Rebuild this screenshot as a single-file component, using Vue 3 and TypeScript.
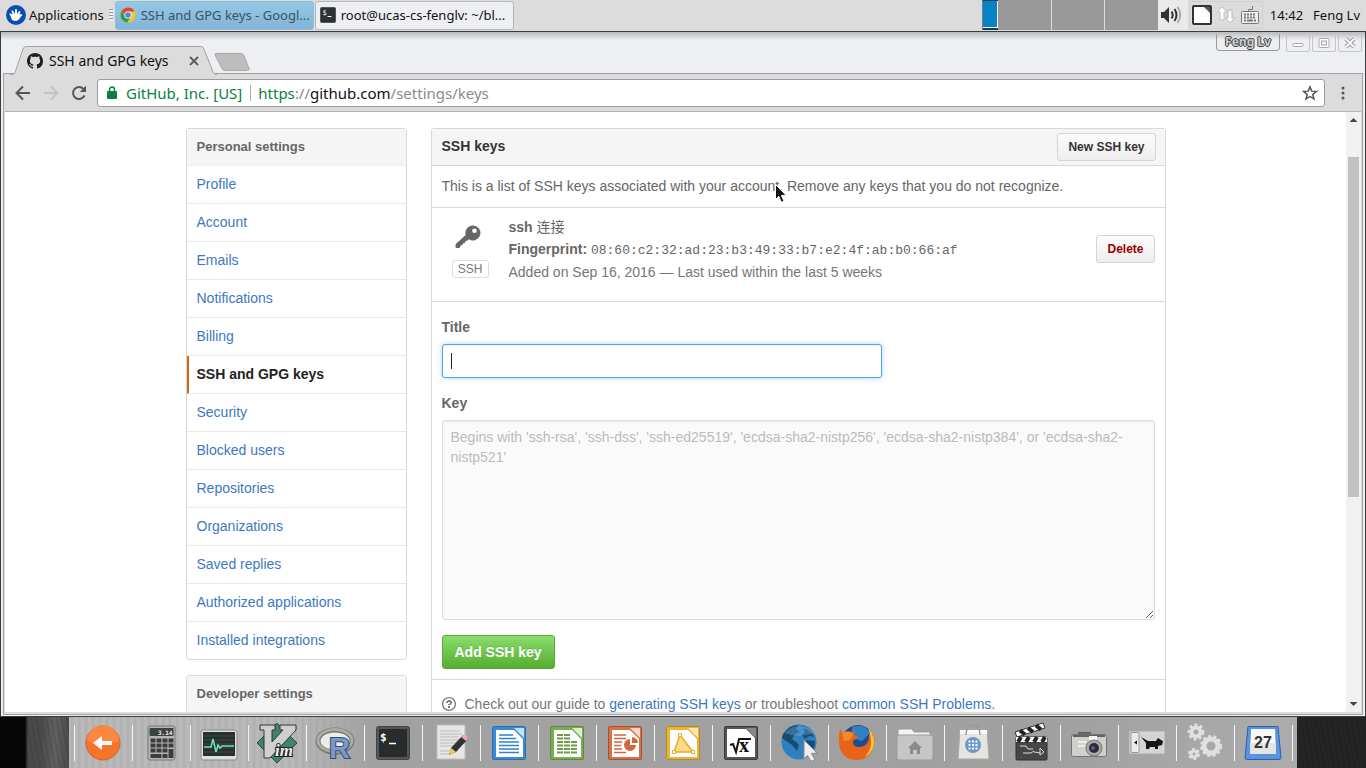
<script setup lang="ts">
import { ref } from 'vue'

const personalLinks: string[] = [
  'Profile',
  'Account',
  'Emails',
  'Notifications',
  'Billing',
  'SSH and GPG keys',
  'Security',
  'Blocked users',
  'Repositories',
  'Organizations',
  'Saved replies',
  'Authorized applications',
  'Installed integrations',
]
const current = 'SSH and GPG keys'
const title = ref('')
const keyText = ref('')
const placeholder =
  "Begins with 'ssh-rsa', 'ssh-dss', 'ssh-ed25519', 'ecdsa-sha2-nistp256', 'ecdsa-sha2-nistp384', or 'ecdsa-sha2-nistp521'"
</script>

<template>
  <div class="desktop">
    <header class="panel">
      <button class="apps" type="button">
        <svg width="20" height="20" viewBox="0 0 20 20">
          <circle cx="10" cy="10" r="10" fill="#0a4fb0" />
          <path d="M3.4 8.6c1.400-.6 2 .2 2.600 1l.5-.2-1-3.500c.8-.8 1.700-.3 2 .5l.9 2.200.6-.1.1-4c.9-.8 1.800-.4 1.900.5l.1 3.400.6.2 1.300-2.500c1.100-.3 1.600.4 1.300 1.300l-.8 2.300c1.300-.6 2.600-.6 3.100.3-1.300 1-2.300 2.200-3 3.600-1.300 2.500-4.600 3.200-7 1.700-1.300-.8-1.300-2.400-1.800-3.700-.4-1.100-1.500-1.700-1.400-3z" fill="#fff" />
        </svg>
        <span>Applications</span>
      </button>
      <span class="grip"></span>
      <button class="task active" type="button">
        <svg width="16" height="16" viewBox="0 0 16 16">
          <circle cx="8" cy="8" r="7.500" fill="#f6c62f" />
          <path d="M1.500 4.200A7.500 7.500 0 0 1 14.700 4.500H8a3.600 3.600 0 0 0-3.400 4.600z" fill="#e0453a" />
          <path d="M1.500 4.200A7.500 7.500 0 0 0 7.300 15.500l3.200-5.500A3.500 3.500 0 0 1 4.800 9.600z" fill="#2f9e52" />
          <circle cx="8" cy="8" r="3.600" fill="#fff" />
          <circle cx="8" cy="8" r="2.800" fill="#4a86e8" />
        </svg>
        <span>SSH and GPG keys - Googl...</span>
      </button>
      <button class="task" type="button">
        <svg width="16" height="16" viewBox="0 0 16 16">
          <rect x=".5" y=".5" width="15" height="15" rx="1" fill="#2e3133" stroke="#555" />
          <text x="2.500" y="8" class="mono-glyph" font-size="7" fill="#fff">$</text>
          <path d="M7.500 9.500h4" stroke="#fff" />
        </svg>
        <span>root@ucas-cs-fenglv: ~/bl...</span>
      </button>
      <div class="panel-gap"></div>
      <div class="pager">
        <span class="ws-now"></span><span class="ws-first"></span><span class="ws"></span><span class="ws"></span>
      </div>
      <button class="sound" type="button" aria-label="Volume">
        <svg width="24" height="22" viewBox="0 0 24 22">
          <path d="M1 8h3l5-5v16l-5-5H1z" fill="#2d3436" />
          <path d="M11.500 7.500q2.500 3.500 0 7M14.500 5q4 6 0 12" fill="none" stroke="#2d3436" stroke-width="2" />
          <path d="M17.500 3q5.500 8 0 16" fill="none" stroke="#aaa" stroke-width="2" />
        </svg>
      </button>
      <div class="tray">
        <svg width="20" height="20" viewBox="0 0 20 20">
          <rect x="1" y="1" width="18" height="18" rx="1" fill="#fff" stroke="#333" stroke-width="2" />
          <path d="M12 2h6v6z" fill="#555" />
        </svg>
        <svg width="20" height="20" viewBox="0 0 20 20">
          <path d="M6 2l5 5H8v8H4V7H1z" fill="#fafafa" stroke="#c6c6c6" />
          <path d="M14 18l5-5h-3V5h-4v8H9z" fill="#fafafa" stroke="#bbb" />
        </svg>
        <svg width="20" height="20" viewBox="0 0 20 20" fill="none" stroke="#777">
          <path d="M8.500 7V4.500h4V1" />
          <rect x="1.500" y="6.500" width="17" height="12" rx="1" fill="#efefef" />
          <path d="M4 9.500h12M4 12.500h12" stroke-width="2" stroke-dasharray="2 1" />
          <path d="M4 15.500h2M7 15.500h6M14 15.500h2" stroke-width="2" />
        </svg>
      </div>
      <span class="clock">14:42</span>
      <span class="user">Feng Lv</span>
    </header>

    <section class="window">
      <div class="titlebar">
        <div class="tab">
          <svg class="tab-shape" width="208" height="30" viewBox="0 0 208 30">
            <path d="M0 28.500h2q2 0 3-2L13 3q1-2.500 3-2.500h175q2 0 3 2.500l9 23q1 2.500 4 2.500V30H0z" fill="#dcdcdc" />
            <path d="M0 28.500h2q2 0 3-2L13 3q1-2.500 3-2.500h175q2 0 3 2.500l9 23q1 2.500 4 2.500" fill="none" stroke="#a3a3a3" />
          </svg>
          <svg class="mark" width="16" height="16" viewBox="0 0 16 16">
            <path d="M8 0C3.58 0 0 3.58 0 8c0 3.54 2.29 6.53 5.47 7.59.4.07.55-.17.55-.38 0-.19-.01-.82-.01-1.490-2.010.37-2.530-.49-2.690-.94-.09-.23-.48-.94-.82-1.130-.28-.15-.68-.52-.01-.53.63-.01 1.080.58 1.230.82.72 1.210 1.870.87 2.330.66.07-.52.28-.87.51-1.070-1.780-.2-3.640-.89-3.640-3.950 0-.87.31-1.590.82-2.150-.08-.2-.36-1.020.08-2.120 0 0 .67-.21 2.200.82.64-.18 1.320-.27 2-.27s1.360.09 2 .27c1.530-1.040 2.200-.82 2.200-.82.44 1.100.16 1.920.08 2.120.51.56.82 1.270.82 2.150 0 3.070-1.870 3.750-3.650 3.950.29.25.54.73.54 1.480 0 1.070-.01 1.930-.01 2.200 0 .21.15.46.55.38A8.010 8.010 0 0 0 16 8c0-4.420-3.580-8-8-8z" fill="#1b1f23" />
          </svg>
          <span class="tab-name">SSH and GPG keys</span>
          <button class="tab-close" type="button" aria-label="Close tab">
            <svg width="10" height="10" viewBox="0 0 10 10"><path d="M1 1l8 8M9 1L1 9" stroke="#5a5a5a" stroke-width="1.800" /></svg>
          </button>
        </div>
        <button class="newtab" type="button" aria-label="New tab">
          <svg width="36" height="19" viewBox="0 0 36 19"><path d="M2 .5h25q2 0 3 2l5 13q.5 2-1.500 2H11q-2 0-3-2L1 2Q.5.500 2 .5z" fill="#bdbdbd" stroke="#a8a8a8" /></svg>
        </button>
        <div class="panel-gap"></div>
        <span class="owner">Feng Lv</span>
        <div class="controls">
          <button type="button" aria-label="Minimize"><svg width="16" height="14" viewBox="0 0 16 14"><rect x="3" y="7.500" width="10" height="3" rx="1" fill="#fff" stroke="#aaa" /></svg></button>
          <button type="button" aria-label="Maximize"><svg width="16" height="14" viewBox="0 0 16 14"><rect x="3" y="2.500" width="10" height="9" rx="1" fill="#fff" stroke="#aaa" /><rect x="5.500" y="5" width="5" height="4" fill="#eee" stroke="#aaa" /></svg></button>
          <button type="button" aria-label="Close"><svg width="16" height="14" viewBox="0 0 16 14"><path d="M4 3l8 8M12 3l-8 8" stroke="#999" stroke-width="4" /><path d="M4 3l8 8M12 3l-8 8" stroke="#fff" stroke-width="2" /></svg></button>
        </div>
      </div>

      <div class="frame">
        <nav class="toolbar">
          <button type="button" aria-label="Back"><svg width="16" height="16" viewBox="0 0 16 16"><path d="M15 8H2M8 1.500L1.500 8 8 14.500" fill="none" stroke="#555" stroke-width="2" /></svg></button>
          <button type="button" aria-label="Forward"><svg width="16" height="16" viewBox="0 0 16 16"><path d="M1 8h13M8 1.500L14.500 8 8 14.500" fill="none" stroke="#c4c4c4" stroke-width="2" /></svg></button>
          <button type="button" aria-label="Reload"><svg width="16" height="16" viewBox="0 0 16 16"><path d="M13.500 10.500A6 6 0 1 1 12.500 4" fill="none" stroke="#555" stroke-width="2" /><path d="M15 .8v6.200H8.800z" fill="#555" /></svg></button>
          <div class="omnibox">
            <svg width="10" height="13" viewBox="0 0 10 13"><rect x="0" y="5" width="10" height="8" rx="1" fill="#0b8043" /><path d="M2.500 5.500V3.500a2.500 2.500 0 0 1 5 0v2" fill="none" stroke="#0b8043" stroke-width="1.500" /></svg>
            <span class="secure">GitHub, Inc. [US]</span>
            <span class="url" role="textbox" aria-label="Address"><span class="green">https</span><span class="dim">://</span>github.com<span class="dim">/settings/keys</span></span>
            <button type="button" aria-label="Bookmark"><svg width="16" height="16" viewBox="0 0 16 16"><path d="M8 1.800l1.700 4.300 4.700.3-3.600 3 1.200 4.600L8 11.500 4 14l1.200-4.600-3.600-3 4.700-.3z" fill="none" stroke="#4d4d4d" stroke-width="1.400" /></svg></button>
          </div>
          <button type="button" aria-label="Menu"><svg width="4" height="14" viewBox="0 0 4 14" fill="#555"><circle cx="2" cy="2" r="1.500" /><circle cx="2" cy="7" r="1.500" /><circle cx="2" cy="12" r="1.500" /></svg></button>
        </nav>

        <div class="viewport">
          <div class="page">
            <div class="container">
              <aside class="side">
                <nav class="menu">
                  <h3>Personal settings</h3>
                  <a v-for="link in personalLinks" :key="link" href="#" :class="{ selected: link === current }">{{ link }}</a>
                </nav>
                <nav class="menu">
                  <h3>Developer settings</h3>
                </nav>
              </aside>

              <main class="box">
                <div class="box-head">
                  <h2>SSH keys</h2>
                  <button class="btn" type="button">New SSH key</button>
                </div>
                <p class="intro">This is a list of SSH keys associated with your account. Remove any keys that you do not recognize.</p>
                <div class="key-row">
                  <div class="key-kind">
                    <svg width="26" height="24" viewBox="0 0 26 24">
                      <path fill="#666" fill-rule="evenodd" d="M18 .5a7.500 7.500 0 0 0-7.300 9.600L1.300 18.500Q.5 19.200.5 20.200v1.500Q.5 23 1.800 23h2q1.200 0 1.400-1.200l.3-1.300 1.700-.2.8-2 1.800-.2.8-2.200 2-.3 1.200-1.300a7.500 7.500 0 1 0 4.200-13.800zM19.500 3.500a2.300 2.300 0 1 1 0 4.600 2.300 2.300 0 0 1 0-4.600z" />
                    </svg>
                    <span class="badge">SSH</span>
                  </div>
                  <div class="key-info">
                    <div><strong>ssh</strong> 连接</div>
                    <div><strong>Fingerprint:</strong> <code>08:60:c2:32:ad:23:b3:49:33:b7:e2:4f:ab:b0:66:af</code></div>
                    <div class="muted">Added on Sep 16, 2016 — Last used within the last 5 weeks</div>
                  </div>
                  <button class="btn danger" type="button">Delete</button>
                </div>
                <form class="form" @submit.prevent>
                  <label for="key-title">Title</label>
                  <input id="key-title" v-model="title" type="text" />
                  <label for="key-body">Key</label>
                  <textarea id="key-body" v-model="keyText" :placeholder="placeholder"></textarea>
                  <button class="btn primary" type="submit">Add SSH key</button>
                </form>
                <p class="help">
                  <svg width="14" height="16" viewBox="0 0 14 16"><path fill="#767676" d="M6 10h2v2H6v-2zm4-3.500C10 8.640 8 9 8 9H6c0-.55.45-1 1-1h.5c.28 0 .5-.22.5-.5v-1c0-.28-.22-.5-.5-.5h-1c-.28 0-.5.22-.5.5V7H4c0-1.500 1.500-3 3-3s3 1 3 2.500zM7 2.300c3.140 0 5.700 2.560 5.700 5.700s-2.560 5.700-5.700 5.700A5.710 5.710 0 0 1 1.300 8c0-3.140 2.560-5.700 5.700-5.700zM7 1C3.140 1 0 4.140 0 8s3.140 7 7 7 7-3.140 7-7-3.140-7-7-7z" /></svg>
                  <span>Check out our guide to <a href="#">generating SSH keys</a> or troubleshoot <a href="#">common SSH Problems</a>.</span>
                </p>
              </main>
            </div>
          </div>
          <div class="scrollbar">
            <svg width="15" height="15" viewBox="0 0 15 15"><path d="M3.500 10h8l-4-4z" fill="#444" /></svg>
            <div class="track"><div class="thumb"></div></div>
            <svg width="15" height="15" viewBox="0 0 15 15"><path d="M3.500 5h8l-4 4z" fill="#444" /></svg>
          </div>
        </div>
      </div>
    </section>

    <footer class="shelf">
      <nav class="dock">
        <button type="button" aria-label="Back">
          <svg viewBox="0 0 40 40"><circle cx="20" cy="20" r="17" fill="#f4742c" stroke="#d9622a" /><path d="M4 18a16 16 0 0 1 32 0q-16 5-32 0z" fill="#ff9248" opacity=".7" /><path d="M10 20l9-7v5h10v4H19v5z" fill="#fff" /></svg>
        </button>
        <button type="button" aria-label="Calculator">
          <svg viewBox="0 0 40 40"><rect x="7" y="3" width="27" height="34" rx="2" fill="#b5b5b3" stroke="#777" /><rect x="8.500" y="5" width="24" height="8" rx="1" fill="#3e4240" /><text x="17" y="11.500" class="mono-glyph" font-size="6" font-weight="bold" fill="#eee">3.14</text><g stroke="#3c3c3c" stroke-width="4" stroke-dasharray="5 1"><path d="M9.500 17.500h23M9.500 22.500h23M9.500 27.500h17" /></g><path d="M9.500 33h11M21.500 33h5" stroke="#3c3c3c" stroke-width="4" /><rect x="27.500" y="26" width="5" height="9" fill="#3c3c3c" /></svg>
        </button>
        <button type="button" aria-label="System monitor">
          <svg viewBox="0 0 40 40"><rect x="2" y="7" width="36" height="30" rx="2" fill="#dededc" stroke="#888" /><rect x="4" y="9" width="32" height="24" fill="#27302d" /><path d="M5 13h30M5 17h30M5 21h30M5 25h30M5 29h30" stroke="#3e4a46" /><path d="M5 24h7l2-8 3 13 2-7 2 3 2-2h12" fill="none" stroke="#74e0b8" stroke-width="1.500" /></svg>
        </button>
        <button type="button" aria-label="Vim">
          <svg viewBox="0 0 40 40"><path d="M20 0l20 20-20 20L0 20z" fill="#3f8468" stroke="#24503f" /><path d="M3 2h15v5h-3v12L26 7h-3V2h16v5L13 35H7V7H3z" fill="#cfcfcf" stroke="#333" /><text x="18" y="33" class="serif-glyph vim-text" font-size="17" font-style="italic" font-weight="bold" fill="#eee" stroke="#222" stroke-width="2">im</text></svg>
        </button>
        <button type="button" aria-label="R">
          <svg viewBox="0 0 40 40"><ellipse cx="20" cy="18" rx="17" ry="11" fill="#ececec" stroke="#74786f" stroke-width="5" /><ellipse cx="20" cy="17.500" rx="17" ry="11" fill="none" stroke="#a9ada4" stroke-width="3" /><text x="14" y="35" class="sans-glyph vim-text" font-size="29" font-weight="bold" fill="#7d97c6" stroke="#304a7a" stroke-width="2">R</text></svg>
        </button>
        <button type="button" aria-label="Terminal">
          <svg viewBox="0 0 40 40"><rect x="3.500" y="3.500" width="33" height="33" rx="2" fill="#545756" stroke="#444" /><rect x="6" y="6" width="28" height="28" fill="#292c2c" /><text x="7" y="18" class="mono-glyph" font-size="11" font-weight="bold" fill="#fff">$</text><path d="M16 20.500h7" stroke="#fff" stroke-width="1.500" /></svg>
        </button>
        <button type="button" aria-label="Text editor">
          <svg viewBox="0 0 40 40"><path d="M6 2h28v34H6z" fill="#e6e6e4" stroke="#bbb" /><path d="M9 8h20M9 11h22M9 14h18M9 17h21M9 20h17M9 23h19M9 28h12M9 31h10" stroke="#bbb" /><path d="M18 32l2-7L32 12l5 4-12 13z" fill="#333" /><path d="M32 12q4-2 5 4l-2 2-5-4z" fill="#e6a5c0" /><path d="M18 32l2-7 5 4z" fill="#f1d34b" /></svg>
        </button>
        <button type="button" aria-label="Writer">
          <svg viewBox="0 0 40 40"><rect x="3.500" y="3.500" width="33" height="33" rx="1.500" fill="#3b8bd0" stroke="#2a6fb5" /><path d="M7 7h18l9 9v18H7z" fill="#fff" /><path d="M25 5h10v10z" fill="#c4e1f7" /><path d="M10 12h14M10 15.500h17M10 19h20M10 22.500h20M10 26h20M10 29.500h20" stroke="#2f82cc" stroke-width="1.500" /></svg>
        </button>
        <button type="button" aria-label="Spreadsheet">
          <svg viewBox="0 0 40 40"><rect x="3.500" y="3.500" width="33" height="33" rx="1.500" fill="#7cab55" stroke="#5c8b3a" /><path d="M7 7h18l9 9v18H7z" fill="#fff" /><path d="M25 5h10v10z" fill="#dcedc9" /><path d="M10 12h13M10 15.500h13M10 19h20M10 22.500h20M10 26h20M10 29.500h20" stroke="#6c9f45" stroke-width="2" stroke-dasharray="6 1" /></svg>
        </button>
        <button type="button" aria-label="Presentation">
          <svg viewBox="0 0 40 40"><rect x="3.500" y="3.500" width="33" height="33" rx="1.500" fill="#d6724a" stroke="#a9502c" /><path d="M7 7h18l9 9v18H7z" fill="#fff" /><path d="M25 5h10v10z" fill="#f8d5c4" /><path d="M9 12h12M9 15.500h12M9 19h8M9 22.500h7M9 26h8M9 29.500h12" stroke="#d0673d" stroke-width="1.500" /><path d="M25 16a6 6 0 1 0 6 6h-6zM27 14v6h6q0-5-6-6z" fill="#d0673d" /></svg>
        </button>
        <button type="button" aria-label="Draw">
          <svg viewBox="0 0 40 40"><rect x="3.500" y="3.500" width="33" height="33" rx="1.500" fill="#e9b43a" stroke="#bd8a1d" /><path d="M7 7h18l9 9v18H7z" fill="#fff" /><path d="M25 5h10v10z" fill="#fbe8b5" /><path d="M17 12l13 17H11z" fill="#f9dc8b" stroke="#e8ac1c" stroke-width="1.500" /><path d="M15.500 10.500h3v3h-3zM9.500 27.500h3v3h-3zM28.500 27.500h3v3h-3z" fill="#fff" stroke="#e8ac1c" /></svg>
        </button>
        <button type="button" aria-label="Math">
          <svg viewBox="0 0 40 40"><rect x="3.500" y="3.500" width="33" height="33" rx="1.500" fill="#555" stroke="#3a3a3a" /><path d="M6 6h19l9 9v19H6z" fill="#fff" /><path d="M25 5h10v10z" fill="#888" /><text x="18" y="29" class="serif-glyph" font-size="20" font-weight="bold" fill="#111">x</text><path d="M9 22l3-1 3 8 3-13h12" fill="none" stroke="#111" stroke-width="2" /></svg>
        </button>
        <button type="button" aria-label="Web browser">
          <svg viewBox="0 0 40 40"><circle cx="20" cy="19" r="17.500" fill="#2f80bf" /><path d="M4 11q6-9 15-9l-2 4 4 3-5 2-3 5 4 3 3 3-2 6-5-6-6-4-4-3zM24 5q9 3 11 9l-5-1-4 3-3-4 3-3zM27 17l9 1q0 8-6 14l-3-6z" fill="#1a4c70" /><path d="M5 10q14-14 30 0-14 6-30 0z" fill="#7cc0ec" opacity=".3" /><path d="M25 17l13 13-5.500.5 3.500 6-4 2-3.500-6-3.500 4z" fill="#ededed" stroke="#888" /></svg>
        </button>
        <button type="button" aria-label="Firefox">
          <svg viewBox="0 0 40 40"><circle cx="21" cy="18" r="16" fill="#1c4f8f" /><path d="M15 4q12-5 18 6l-8 8-10-3z" fill="#327fc2" /><path d="M3 6l3 4q4-3 9-1l3-2-1 5 4 2-5 4q-1 6 7 6 10-1 9-14 3 3 2 8 2-3 1-9 4 6 2 14-4 14-17 14Q6 37 2.500 24 1 14 3 6z" fill="#e8641b" /><path d="M31 5q9 9 5 20-3 7-8 9 7-8 6-17-1-8-3-12z" fill="#f7c43a" /><path d="M5 10q6-3 11 1l-3 6-6 1z" fill="#f38b28" /></svg>
        </button>
        <button type="button" aria-label="Home folder">
          <svg viewBox="0 0 40 40"><path d="M3 7q0-1 1-1h13l2 3h15q1 0 1 1v5H3z" fill="#f4f4f4" stroke="#999" /><rect x="2" y="12" width="36" height="25" rx="2" fill="#c6c6c6" stroke="#999" /><path d="M20 18l7 7h-2v6h-3v-4h-4v4h-3v-6h-2z" fill="#8b8b8b" /></svg>
        </button>
        <button type="button" aria-label="Software">
          <svg viewBox="0 0 40 40"><path d="M7 7h27l2 29H5z" fill="#e5e5df" stroke="#aaa" /><path d="M7 7h27v4H7z" fill="#f9f9f7" /><path d="M13 12q0-10 7-10t7 10" fill="none" stroke="#999" stroke-width="1.500" /><circle cx="20" cy="22" r="8" fill="#6d96c9" /><path d="M15.500 18.500h9M15.500 22h9M15.500 25.500h9" stroke="#fff" stroke-width="2" stroke-dasharray="2 1.500" /></svg>
        </button>
        <button type="button" aria-label="Video">
          <svg viewBox="0 0 40 40"><rect x="5" y="14" width="31" height="23" rx="1" fill="#464646" stroke="#303030" /><path d="M4 9L32 0l2 5L6 14z" fill="#fff" stroke="#333" /><path d="M9 7.500l5 4M17 5l5 4M25 2.500l5 4" stroke="#222" stroke-width="4" /><path d="M5 14h31v5H5z" fill="#fff" /><path d="M10 14l-3 5M18 14l-3 5M26 14l-3 5M34 14l-3 5" stroke="#222" stroke-width="4" /><path d="M9 23h6l2 3h5M12 30h8l3-2M23 29l6 1M29 25v7l4-3z" fill="none" stroke="#ddd" /></svg>
        </button>
        <button type="button" aria-label="Camera">
          <svg viewBox="0 0 40 40"><rect x="9" y="9" width="13" height="6" fill="#5d6664" /><rect x="2.500" y="11.500" width="35" height="22" rx="2" fill="#cfd0cc" stroke="#72746f" /><path d="M4 13h32" stroke="#5d6664" stroke-width="2" /><path d="M9 19h8M9 23h7" stroke="#eee" stroke-width="2" /><rect x="20" y="13" width="8" height="4" fill="#f8f8f8" /><circle cx="25" cy="25" r="8" fill="#a7aaa7" stroke="#777" /><circle cx="25" cy="25" r="5" fill="#2b2c33" /><circle cx="24" cy="25" r="2" fill="#704d9b" /></svg>
        </button>
        <button type="button" aria-label="Image viewer">
          <svg viewBox="0 0 40 40"><rect x="2" y="8" width="36" height="23" fill="#d4d4d2" stroke="#aaa" /><rect x="4" y="9.500" width="8" height="20" rx="1" fill="#ebebe9" stroke="#999" /><path d="M7 19.500l3-2v4z" fill="#111" /><path d="M14 14l7 4h8l2-3 3 2 2 1-1 4-4 1v3h-3v-2h-5l-1 2h-3v-6z" fill="#161616" /></svg>
        </button>
        <button type="button" aria-label="Settings">
          <svg viewBox="0 0 40 40" fill="none" stroke="#e0e0e0"><g stroke-dasharray="3 2.200"><circle cx="11" cy="9" r="7" stroke-width="3" /><circle cx="26" cy="23" r="9.500" stroke-width="3" /><circle cx="9" cy="31" r="5" stroke-width="2" /></g><circle cx="11" cy="9" r="4.500" stroke-width="4" /><circle cx="26" cy="23" r="7" stroke-width="5" /><circle cx="9" cy="31" r="3" stroke-width="3" /></svg>
        </button>
        <button type="button" aria-label="Calendar">
          <svg viewBox="0 0 40 40"><path d="M5 3.500h30l3 31q0 2-2 2H4q-2 0-2-2z" fill="#5a93e0" stroke="#2c5fae" /><path d="M8 6h24l1 25H7z" fill="#f8f8f8" /><path d="M7 20h26v11H7z" fill="#e4e4e4" /><text x="20" y="25" class="sans-glyph" font-size="16" font-weight="bold" text-anchor="middle" fill="#333">27</text></svg>
        </button>
      </nav>
    </footer>

    <svg class="pointer" width="14" height="20" viewBox="0 0 14 20"><path d="M.5.500v15l3.300-3.200 2.600 6 2.600-1.200-2.600-5.700h4.800z" fill="#111" stroke="#fff" /></svg>
  </div>
</template>

<style>
body {
  margin: 0;
}
</style>

<style scoped>
* {
  box-sizing: border-box;
}
button {
  margin: 0;
  padding: 0;
  border: 0;
  background: none;
  font: inherit;
  color: inherit;
}
svg {
  flex: none;
  display: block;
}
.mono-glyph {
  font-family: 'DejaVu Sans Mono', monospace;
}
.sans-glyph {
  font-family: 'Liberation Sans', sans-serif;
}
.serif-glyph {
  font-family: 'Liberation Serif', serif;
}
.vim-text {
  paint-order: stroke;
}
.desktop {
  position: relative;
  display: flex;
  flex-direction: column;
  height: 100vh;
  overflow: hidden;
  background: #222;
  font-family: 'Noto Sans', sans-serif;
  font-size: 14px;
  color: #111;
}

/* Top panel */
.panel {
  flex: none;
  display: flex;
  align-items: center;
  height: 31px;
  padding: 0 6px 1px;
  background: #dcdcdc;
  font-size: 13px;
  line-height: 18px;
  white-space: nowrap;
}
.panel > span,
.panel button span {
  padding-bottom: 1px;
}
.panel-gap {
  flex: 1;
}
.apps {
  display: flex;
  align-items: center;
  gap: 3px;
}
.grip {
  width: 4px;
  height: 12px;
  margin: 0 2px 0 5px;
  background: repeating-linear-gradient(#999 0 1px, #eee 1px 3px);
}
.task {
  display: flex;
  align-items: center;
  gap: 5px;
  width: 199px;
  height: 29px;
  padding: 0 4px;
  border: 1px solid #b4b6bb;
  border-radius: 3px;
  background: #eeeff2;
}
.task.active {
  border-color: #90bedb;
  background: linear-gradient(#93c9e5, #83b4d6);
  color: #3b5260;
  margin-right: 1px;
}
.pager {
  display: flex;
  align-self: stretch;
  width: 176px;
  background: #999;
  border-left: 1px solid #777;
}
.ws-now {
  width: 15px;
  border: solid #124059;
  border-width: 1px 0 2px;
  background: #0683c5;
  box-shadow: inset -1px 0 #fff, inset 0 -1px #fff;
}
.ws-first {
  width: 53px;
}
.ws {
  flex: 1;
  border-left: 1px solid #ddd;
}
.sound {
  display: flex;
  align-items: center;
  align-self: stretch;
  width: 30px;
  padding-left: 2px;
  background: #eaeaea;
}
.tray {
  display: flex;
  align-items: center;
  gap: 4px;
  height: 28px;
  margin-left: 1px;
  padding: 0 2px;
  border: 1px solid #cfd2d5;
  border-radius: 2px;
}
.clock {
  margin-left: 7px;
}
.user {
  margin-left: 10px;
}

/* Browser window */
.window {
  flex: 1;
  min-height: 0;
  display: flex;
  flex-direction: column;
  border: 1px solid #3c3c3e;
  background: linear-gradient(#b8b9bb, #eeeff2 8px);
}
.titlebar {
  flex: none;
  display: flex;
  align-items: flex-start;
  height: 42px;
  margin-bottom: -1px;
  padding: 0 3px 0 9px;
  z-index: 1;
}
.tab {
  position: relative;
  display: flex;
  align-items: center;
  width: 208px;
  height: 30px;
  margin-top: 14px;
  padding-left: 17px;
}
.tab-shape {
  position: absolute;
  left: 0;
  top: 0;
}
.mark,
.tab-name,
.tab-close {
  position: relative;
}
.tab-name {
  flex: 1;
  margin-left: 6px;
  padding-bottom: 2px;
  white-space: nowrap;
}
.tab-close {
  margin-right: 19px;
}
.newtab {
  margin: 21px 0 0 -4px;
}
.owner {
  width: 64px;
  height: 17px;
  margin: 2px 6px 0 0;
  border: 1px solid #999;
  border-top: 0;
  border-radius: 0 0 4px 4px;
  font-size: 12px;
  font-weight: bold;
  line-height: 15px;
  text-align: center;
  color: #ccc;
  text-shadow: 1px 0 #444, -1px 0 #444, 0 1px #444, 0 -1px #444;
}
.controls {
  display: flex;
  gap: 2px;
  margin-top: 2px;
}
.controls button {
  display: flex;
  align-items: center;
  justify-content: center;
  width: 24px;
  height: 18px;
  border: 1px solid #c5c5c7;
  border-radius: 2px;
}
.frame {
  flex: 1;
  min-height: 0;
  display: flex;
  flex-direction: column;
  margin: 0 2px 1px;
  padding: 0 1px 2px;
  border: 1px solid #a3a3a3;
  background: #dcdcdc;
}
.toolbar {
  flex: none;
  display: flex;
  align-items: center;
  height: 38px;
  padding: 0 16px 0 10px;
  border-bottom: 1px solid #b4b4b4;
  gap: 12px;
}
.omnibox {
  flex: 1;
  display: flex;
  align-items: center;
  height: 28px;
  margin: 0 4px 0 -2px;
  padding: 0 6px 0 9px;
  border: 1px solid #9d9d9d;
  border-radius: 3px;
  background: #fff;
  font-size: 15px;
}
.secure {
  margin-left: 9px;
  padding-right: 8px;
  border-right: 1px solid #aaa;
  color: #0b8043;
  line-height: 16px;
}
.url {
  flex: 1;
  margin-left: 7px;
  line-height: 16px;
}
.green {
  color: #0b8043;
}
.dim {
  color: #8a8a8a;
}

/* Page */
.viewport {
  flex: 1;
  min-height: 0;
  display: flex;
  overflow: hidden;
  background: #fff;
  font-family: 'Liberation Sans', 'Noto Sans CJK SC', sans-serif;
  line-height: 20px;
  color: #666;
}
.page {
  flex: 1;
  overflow: hidden;
}
.container {
  display: flex;
  align-items: flex-start;
  gap: 24px;
  max-width: 980px;
  margin: 0 auto;
  padding-top: 16px;
}
.side {
  flex: none;
  width: 221px;
}
.menu {
  margin-bottom: 15px;
  border: 1px solid #d8d8d8;
  border-radius: 3px;
}
.menu h3 {
  margin: 0;
  padding: 8px 9px;
  border-bottom: 1px solid #eee;
  background: #f5f5f5;
  font-size: 13px;
}
.menu a {
  display: block;
  padding: 8px 9px 9px;
  border-bottom: 1px solid #e8e8e8;
  color: #4078c0;
  text-decoration: none;
}
.menu h3,
.menu a {
  padding-left: 10px;
}
.menu a:last-child {
  border-bottom: 0;
}
.menu a.selected {
  padding-left: 8px;
  border-left: 2px solid #d26911;
  color: #222;
  font-weight: bold;
}
.box {
  flex: 1;
  border: 1px solid #d8d8d8;
  border-radius: 3px 3px 0 0;
}
.box-head {
  display: flex;
  align-items: center;
  justify-content: space-between;
  height: 37px;
  padding: 0 9px 0 10px;
  border-bottom: 1px solid #d8d8d8;
  background: #f5f5f5;
}
.box-head h2 {
  margin: 0;
  padding-bottom: 2px;
  font-size: 14px;
  color: #333;
}
.btn {
  height: 28px;
  padding: 0 10px;
  border: 1px solid #d5d5d5;
  border-radius: 3px;
  background: linear-gradient(#fcfcfc, #eee);
  font-size: 12px;
  font-weight: bold;
  color: #333;
}
.danger {
  color: #900;
}
.intro {
  margin: 0;
  padding: 10px 10px 11px;
  border-bottom: 1px solid #d8d8d8;
}
.key-row {
  display: flex;
  align-items: flex-start;
  height: 94px;
  padding: 8px 10px;
  border-bottom: 1px solid #d8d8d8;
}
.key-kind {
  display: flex;
  flex-direction: column;
  align-items: center;
  gap: 11px;
  width: 52px;
  margin-right: 15px;
  padding-top: 9px;
}
.badge {
  width: 37px;
  height: 18px;
  margin-left: 5px;
  border: 1px solid #ddd;
  border-radius: 3px;
  font-size: 12px;
  line-height: 16px;
  text-align: center;
  color: #767676;
}
.key-info {
  flex: 1;
  line-height: 22px;
}
.key-info > div {
  height: 22px;
}
.key-info code {
  font-family: 'Liberation Mono', monospace;
  font-size: 13px;
}
.key-info .muted {
  line-height: 24px;
}
.muted {
  color: #767676;
}
.key-row .btn {
  align-self: center;
  margin-top: -11px;
}
.form {
  display: flex;
  flex-direction: column;
  align-items: flex-start;
  padding: 15px 10px 10px;
  border-bottom: 1px solid #d8d8d8;
}
.form label {
  margin-bottom: 7px;
  font-weight: bold;
}
.form input {
  width: 440px;
  max-width: 100%;
  height: 34px;
  margin-bottom: 15px;
  padding: 6px 8px;
  border: 1px solid #51a7e8;
  border-radius: 3px;
  outline: 0;
  background: linear-gradient(#222, #222) 8px 8px / 1px 16px no-repeat #fff;
  box-shadow: inset 0 1px 2px #0001, 0 0 5px #51a7e880;
  font: inherit;
}
.form textarea {
  width: 100%;
  height: 200px;
  margin-bottom: 15px;
  padding: 6px 8px;
  border: 1px solid #ddd;
  border-radius: 3px;
  background: #fafafa;
  box-shadow: inset 0 1px 2px #00000013;
  font: inherit;
  resize: vertical;
}
.form textarea::placeholder {
  color: #bbb;
}
.primary {
  height: 34px;
  padding: 0 12px;
  border-color: #5ca941;
  background: linear-gradient(#8add6d, #55ae2e);
  font-size: 14px;
  color: #fff;
  text-shadow: 0 -1px 0 #00000026;
}
.help {
  display: flex;
  align-items: center;
  gap: 9px;
  margin: 0;
  padding: 14px 10px;
  color: #767676;
}
.help a {
  color: #4078c0;
  text-decoration: none;
}
.scrollbar {
  flex: none;
  display: flex;
  flex-direction: column;
  width: 15px;
  background: #f1f1f1;
}
.track {
  flex: 1;
  padding: 30px 2px 0;
}
.thumb {
  height: 63%;
  background: #c1c1c1;
}

/* Dock */
.shelf {
  flex: none;
  display: flex;
  justify-content: center;
  height: 51px;
  background:
    repeating-linear-gradient(80deg, #0000 0 3px, #0000001a 4px 5px),
    linear-gradient(90deg, #060606 0 25px, #4a4a4a 28px 40px, #606060 55px, #4c4c4c 69px, #242424 70px);
}
.dock {
  display: flex;
  padding: 8px 4px 0 5px;
  background:
    linear-gradient(90deg, #a2a2a200 220px, #a2a2a2 300px, #a0a0a0 80%, #acacac),
    repeating-linear-gradient(90deg, #ffffff10 0 1px, #00000007 2px 4px, #ffffff0c 5px 7px),
    #b6b6b6;
}
.dock button {
  display: flex;
  justify-content: center;
  width: 58px;
  height: 36px;
  padding-right: 2px;
  border-left: 1px solid #f4f4f4;
}
.dock button:last-child {
  width: 59px;
  border-right: 1px solid #f4f4f4;
}
.dock svg {
  width: 40px;
  height: 40px;
  margin-top: -2px;
  overflow: visible;
}
.pointer {
  position: absolute;
  left: 775px;
  top: 184px;
}
</style>
